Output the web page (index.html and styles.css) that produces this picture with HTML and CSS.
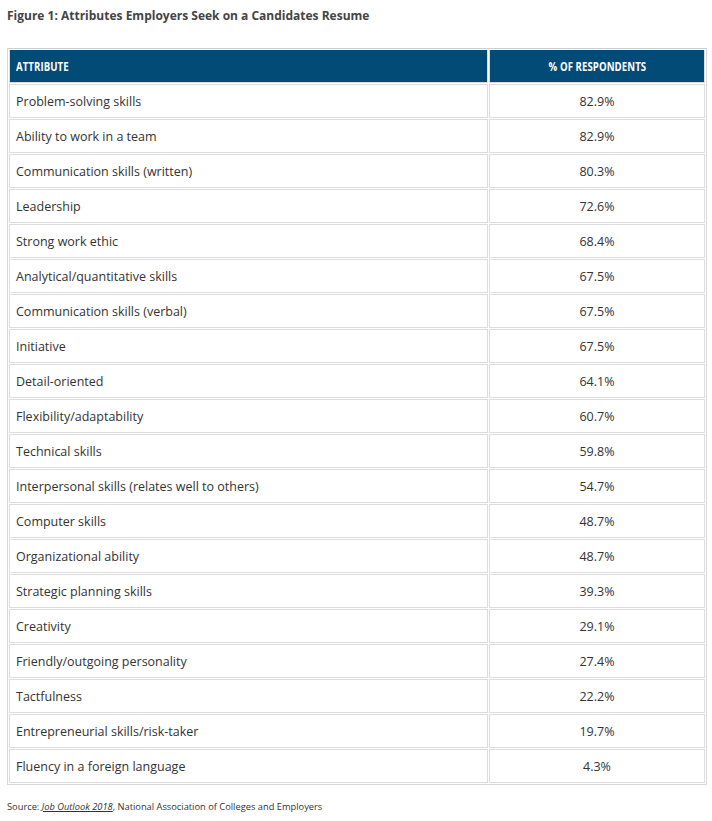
FILE: index.html
```html
<!DOCTYPE html>
<html>
<head>
<meta charset="utf-8">
<link rel="stylesheet" href="styles.css">
</head>
<body>
<h3 class="title">Figure 1: Attributes Employers Seek on a Candidates Resume</h3>
<table class="data">
<thead>
<tr><th class="c1"><span class="hd hd-left">ATTRIBUTE</span></th><th class="c2"><span class="hd hd-center">% OF RESPONDENTS</span></th></tr>
</thead>
<tbody>
<tr><td>Problem-solving skills</td><td class="num">82.9%</td></tr>
<tr><td>Ability to work in a team</td><td class="num">82.9%</td></tr>
<tr><td>Communication skills (written)</td><td class="num">80.3%</td></tr>
<tr><td>Leadership</td><td class="num">72.6%</td></tr>
<tr><td>Strong work ethic</td><td class="num">68.4%</td></tr>
<tr><td>Analytical/quantitative skills</td><td class="num">67.5%</td></tr>
<tr><td>Communication skills (verbal)</td><td class="num">67.5%</td></tr>
<tr><td>Initiative</td><td class="num">67.5%</td></tr>
<tr><td>Detail-oriented</td><td class="num">64.1%</td></tr>
<tr><td>Flexibility/adaptability</td><td class="num">60.7%</td></tr>
<tr><td>Technical skills</td><td class="num">59.8%</td></tr>
<tr><td>Interpersonal skills (relates well to others)</td><td class="num">54.7%</td></tr>
<tr><td>Computer skills</td><td class="num">48.7%</td></tr>
<tr><td>Organizational ability</td><td class="num">48.7%</td></tr>
<tr><td>Strategic planning skills</td><td class="num">39.3%</td></tr>
<tr><td>Creativity</td><td class="num">29.1%</td></tr>
<tr><td>Friendly/outgoing personality</td><td class="num">27.4%</td></tr>
<tr><td>Tactfulness</td><td class="num">22.2%</td></tr>
<tr><td>Entrepreneurial skills/risk-taker</td><td class="num">19.7%</td></tr>
<tr><td>Fluency in a foreign language</td><td class="num">4.3%</td></tr>
</tbody>
</table>
<p class="source">Source: <a class="src-link">Job Outlook 2018</a>, National Association of Colleges and Employers</p>
</body>
</html>
```
FILE: styles.css
```css
html, body {
  margin: 0;
  padding: 0;
  background: #ffffff;
}
body {
  font-family: "Open Sans", "Liberation Sans", sans-serif;
  color: #333333;
  padding: 0 6px 0 7px;
}
.title {
  margin: 0;
  padding-top: 7px;
  font-size: 12px;
  line-height: 18px;
  font-weight: 700;
  color: #444444;
}
.data {
  margin-top: 23px;
  width: 700px;
  border-collapse: separate;
  border-spacing: 1px;
  border: 1px solid #d8d8d8;
  border-top-color: #cfcfcf;
}
.data th {
  background: #034b77;
  color: #ffffff;
  font-family: "Open Sans", sans-serif;
  font-weight: 700;
  font-size: 12.5px;
  height: 32px;
  padding: 0;
  border: 1px solid #dcdcdc;
  border-top: none;
}
.hd {
  display: inline-block;
  transform: scaleX(0.77);
  letter-spacing: 0.1px;
}
.hd-left {
  transform-origin: left center;
}
.hd-center {
  transform-origin: center center;
}
.data th.c1 {
  text-align: left;
  padding-left: 6px;
  width: 471px;
}
.data th.c2 {
  text-align: center;
}
.data td {
  font-size: 12.5px;
  height: 32px;
  padding: 0 0 0 6px;
  border: 1px solid #dddddd;
  color: #333333;
}
.data td.num {
  text-align: center;
  padding: 0;
}
.source {
  margin: 15px 0 0 0;
  font-size: 9.3px;
  color: #333333;
}
.src-link {
  font-style: italic;
  text-decoration: underline;
}
```
